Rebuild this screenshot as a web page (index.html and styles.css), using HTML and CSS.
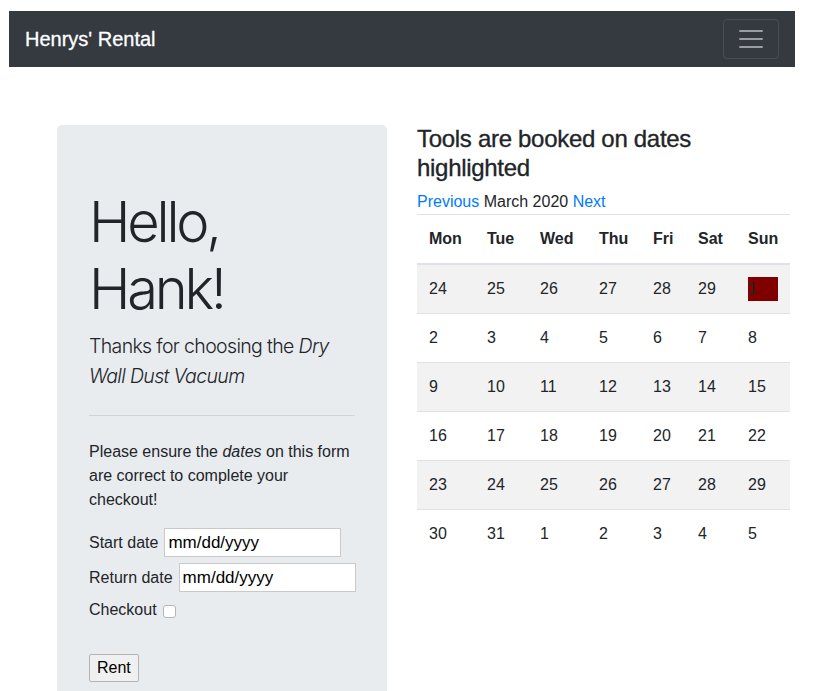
FILE: index.html
```html
<!DOCTYPE html>
<html lang="en">
<head>
<meta charset="utf-8">
<title>Henrys' Rental</title>
<link rel="stylesheet" href="styles.css">
</head>
<body>
<div class="page">
  <nav class="navbar">
    <a class="brand" href="#">Henrys' Rental</a>
    <button class="toggler" type="button" aria-label="Toggle navigation">
      <svg width="30" height="30" viewBox="0 0 30 30"><path stroke="rgba(255,255,255,.5)" stroke-width="2" stroke-linecap="round" stroke-miterlimit="10" d="M4 7h22M4 15h22M4 23h22"/></svg>
    </button>
  </nav>

  <main class="main">
    <section class="jumbotron">
      <h1 class="display">Hello,<br>Hank!</h1>
      <p class="lead">Thanks for choosing the <em>Dry Wall Dust Vacuum</em></p>
      <hr class="divider">
      <p class="note">Please ensure the <em>dates</em> on this form are correct to complete your checkout!</p>
      <form class="rent-form">
        <div class="field">
          <label for="start">Start date</label>
          <input id="start" class="date-input" type="text" value="mm/dd/yyyy">
        </div>
        <div class="field">
          <label for="ret">Return date</label>
          <input id="ret" class="date-input" type="text" value="mm/dd/yyyy">
        </div>
        <div class="field check-field">
          <label for="chk">Checkout</label>
          <input id="chk" class="check" type="checkbox">
        </div>
        <div class="actions">
          <button class="rent-btn" type="button">Rent</button>
        </div>
      </form>
    </section>

    <section class="calendar">
      <h4 class="cal-title">Tools are booked on dates highlighted</h4>
      <div class="cal-nav"><a href="#" class="cal-link">Previous</a> March 2020 <a href="#" class="cal-link">Next</a></div>
      <table class="cal-table">
        <colgroup>
          <col class="c1"><col class="c2"><col class="c3"><col class="c4"><col class="c5"><col class="c6"><col class="c7">
        </colgroup>
        <thead>
          <tr><th>Mon</th><th>Tue</th><th>Wed</th><th>Thu</th><th>Fri</th><th>Sat</th><th>Sun</th></tr>
        </thead>
        <tbody>
          <tr><td>24</td><td>25</td><td>26</td><td>27</td><td>28</td><td>29</td><td><span class="booked">1</span></td></tr>
          <tr><td>2</td><td>3</td><td>4</td><td>5</td><td>6</td><td>7</td><td>8</td></tr>
          <tr><td>9</td><td>10</td><td>11</td><td>12</td><td>13</td><td>14</td><td>15</td></tr>
          <tr><td>16</td><td>17</td><td>18</td><td>19</td><td>20</td><td>21</td><td>22</td></tr>
          <tr><td>23</td><td>24</td><td>25</td><td>26</td><td>27</td><td>28</td><td>29</td></tr>
          <tr><td>30</td><td>31</td><td>1</td><td>2</td><td>3</td><td>4</td><td>5</td></tr>
        </tbody>
      </table>
    </section>
  </main>
</div>
</body>
</html>
```

FILE: styles.css
```css
* { box-sizing: border-box; }

html, body {
  margin: 0;
  padding: 0;
  background: #fff;
}

body {
  font-family: "Liberation Sans", Arial, sans-serif;
  font-size: 16px;
  line-height: 24px;
  color: #212529;
}

.page {
  padding: 11px 0 0 9px;
}

/* Navbar */
.navbar {
  width: 786px;
  height: 56px;
  background: #343a40;
  display: flex;
  align-items: center;
  justify-content: space-between;
  padding: 8px 16px;
}

.brand {
  color: #fff;
  text-decoration: none;
  font-family: "Liberation Sans", Arial, sans-serif;
  font-size: 20px;
  line-height: 30px;
  -webkit-text-stroke: 0.3px #fff;
}

.toggler {
  width: 56px;
  height: 40px;
  padding: 4px 12px;
  background: transparent;
  border: 1px solid rgba(255, 255, 255, 0.1);
  border-radius: 4px;
  display: flex;
  align-items: center;
  justify-content: center;
}

.toggler svg { display: block; }

/* Main layout */
.main {
  display: flex;
  align-items: flex-start;
  gap: 30px;
  margin-top: 58px;
  padding-left: 48px;
}

/* Jumbotron */
.jumbotron {
  width: 330px;
  flex: 0 0 330px;
  background: #e9ecef;
  border-radius: 5px;
  padding: 64px 32px;
}

.display {
  margin: 0 0 8px;
  font-family: Inter, "Noto Sans", sans-serif;
  font-weight: 300;
  font-size: 56px;
  line-height: 67.2px;
  letter-spacing: -3.2px;
  color: #212529;
}

.lead {
  margin: 0 0 16px;
  font-family: Inter, "Noto Sans", sans-serif;
  font-weight: 300;
  font-size: 19.5px;
  line-height: 30px;
  letter-spacing: -0.65px;
}

.divider {
  margin: 24px 0;
  border: 0;
  border-top: 1px solid rgba(0, 0, 0, 0.1);
  height: 0;
}

.note {
  margin: 0 0 16px;
}

.rent-form {
  display: flex;
  flex-direction: column;
  align-items: flex-start;
}

.field {
  display: flex;
  align-items: center;
  gap: 6px;
  height: 29px;
  margin-bottom: 6px;
  white-space: nowrap;
}

.field label {
  flex: 0 0 auto;
  white-space: nowrap;
}

.date-input {
  flex: 0 0 177px;
  width: 177px;
  height: 29px;
  margin: 0;
  padding: 0 3px;
  border: 1px solid #c9c9c9;
  background: #fff;
  font-family: "Liberation Sans", Arial, sans-serif;
  font-size: 17px;
  color: #000;
  border-radius: 0;
}

.check-field {
  height: 24px;
  margin-bottom: 0;
}

.check {
  appearance: none;
  -webkit-appearance: none;
  flex: 0 0 13px;
  width: 13px;
  height: 13px;
  margin: 2px 0 0 0;
  border: 1px solid #b5b5b5;
  border-radius: 3px;
  background: #fff;
}

.actions {
  margin-top: 32px;
}

.rent-btn {
  height: 28px;
  padding: 0 7px;
  font-family: "Liberation Sans", Arial, sans-serif;
  font-size: 16px;
  color: #000;
  background: #f0f0f0;
  border: 1px solid #b4b4b4;
  border-radius: 2px;
}

/* Calendar */
.calendar {
  width: 373px;
  flex: 0 0 373px;
}

.cal-title {
  margin: 0 0 8px;
  font-size: 24px;
  line-height: 28.5px;
  font-weight: 400;
  letter-spacing: -0.3px;
  color: #212529;
  -webkit-text-stroke: 0.35px #212529;
}

.cal-nav {
  line-height: 24px;
}

.cal-link {
  color: #007bff;
  text-decoration: none;
}

.cal-table {
  width: 373px;
  border-collapse: collapse;
  table-layout: fixed;
}

.c1 { width: 58px; }
.c2 { width: 53px; }
.c3 { width: 59px; }
.c4 { width: 54px; }
.c5 { width: 45px; }
.c6 { width: 50px; }
.c7 { width: 54px; }

.cal-table th,
.cal-table td {
  padding: 12px;
  text-align: left;
  vertical-align: top;
  line-height: 24px;
  border-top: 1px solid #dee2e6;
  white-space: nowrap;
}

.cal-table th {
  font-weight: 700;
  border-bottom: 2px solid #dee2e6;
}

.cal-table tbody tr:nth-child(odd) {
  background: #f2f2f2;
}

.booked {
  display: inline-block;
  width: 30px;
  height: 24px;
  background: #800000;
  color: #212529;
}
```
